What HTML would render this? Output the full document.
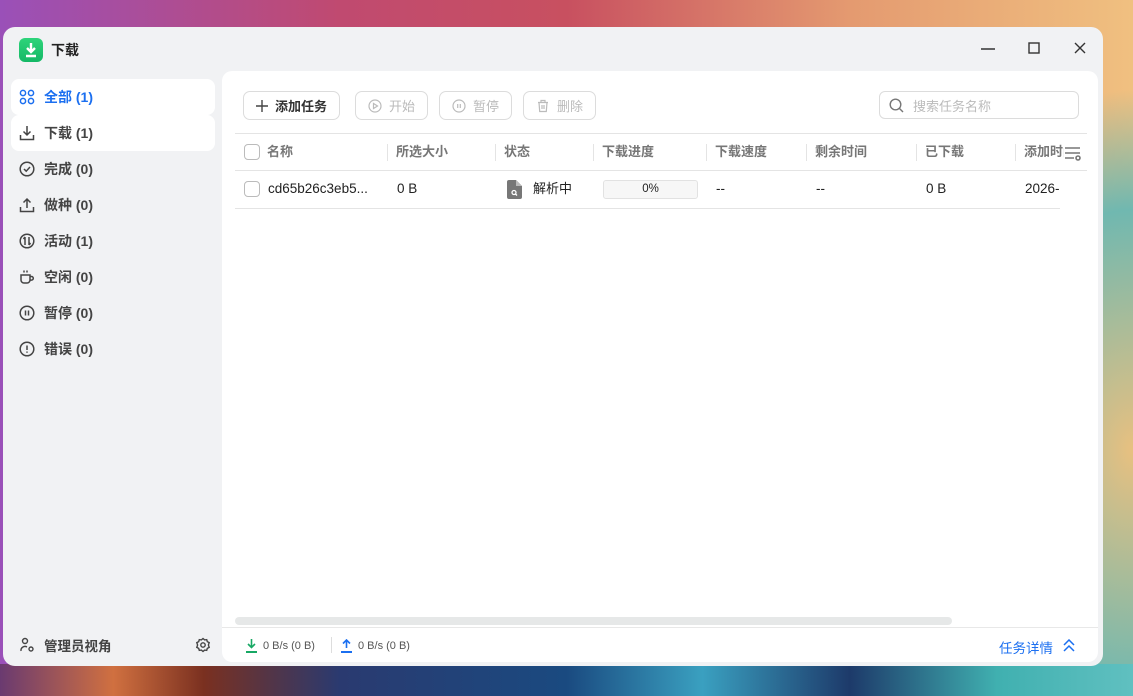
<!DOCTYPE html><html><head><meta charset="utf-8"><style>
*{box-sizing:border-box;margin:0;padding:0}
body{width:1133px;height:696px;overflow:hidden;position:relative;font-family:"Liberation Sans","Noto Sans CJK SC",sans-serif;
background:
radial-gradient(ellipse 260px 400px at 1133px 450px,#e8c080 0%,#70b8b0 60%,transparent 90%),
linear-gradient(90deg,#9a50b8 0%,#c04a70 30%,#c85060 50%,#e49a70 75%,#f0c080 100%);}
.bot{position:absolute;left:0;top:664px;width:1133px;height:32px;background:linear-gradient(90deg,#6a3a70 0%,#d07040 10%,#7a3020 18%,#2a3a70 30%,#1a4a80 50%,#3aa0c0 62%,#1d3a6a 75%,#40b0b0 88%,#60c0c0 100%)}
.win{position:absolute;left:3px;top:27px;width:1100px;height:639px;background:#f1f2f4;border-radius:12px;overflow:hidden}
.logo{position:absolute;left:16px;top:11px;width:24px;height:24px;border-radius:6px;background:linear-gradient(#2ed47a,#14b866)}
.title{position:absolute;left:48px;top:13px;font-size:14px;font-weight:bold;color:#222}
.ctl{position:absolute;top:12px;color:#333}
.nav{position:absolute;left:8px;width:204px;height:36px;border-radius:8px;font-size:14px;font-weight:bold;color:#444;display:flex;align-items:center;padding-left:8px}
.nav svg{margin-right:9px}
.nav.sel{background:#fff;color:#1b6ff0}
.nav.hov{background:#fff}
.main{position:absolute;left:219px;top:44px;width:876px;height:591px;background:#fff;border-radius:10px;overflow:hidden}
.btn{position:absolute;top:20px;height:29px;border:1px solid #dcdcdc;border-radius:7px;font-size:13px;display:flex;align-items:center;padding:0 12px;color:#bbb}
.btn svg{margin-right:7px}
.search{position:absolute;left:657px;top:20px;width:200px;height:28px;border:1px solid #dcdcdc;border-radius:6px;font-size:13px;color:#bbb;display:flex;align-items:center;padding-left:9px}
.hdr{position:absolute;left:13px;top:62px;width:852px;height:38px;border-top:1px solid #e4e4e4;border-bottom:1px solid #e4e4e4;font-size:13px;color:#777;font-weight:bold}
.hdr span,.row span{position:absolute;top:0;line-height:36px}
.sep{position:absolute;top:10px;width:1px;height:17px;background:#e4e4e4}
.row{position:absolute;left:13px;top:100px;width:825px;height:38px;border-bottom:1px solid #e4e4e4;font-size:13.5px;color:#222}
.cb{position:absolute;left:9px;top:10px;width:16px;height:16px;border:1px solid #bbb;border-radius:4px;background:#fff}
.foot{position:absolute;left:0;top:556px;width:876px;height:35px;border-top:1px solid #e8e8e8;font-size:11px;color:#555}
</style></head><body>
<div class="bot"></div>
<div class="win">
<div class="logo"><svg width="24" height="24"><path d="M12 5v9M8 10l4 4 4-4M7 18h10" stroke="#fff" stroke-width="2.4" fill="none"/></svg></div>
<div class="title">下载</div>
<svg class="ctl" style="left:978px" width="14" height="20"><path d="M0 10h14" stroke="#333" stroke-width="1.5"/></svg>
<svg class="ctl" style="left:1025px" width="12" height="20"><rect x="1" y="4" width="10" height="10" stroke="#333" stroke-width="1.4" fill="none"/></svg>
<svg class="ctl" style="left:1071px" width="12" height="20"><path d="M1 4l10 10M11 4L1 14" stroke="#333" stroke-width="1.4"/></svg>

<div class="nav sel" style="top:52px"><svg width="16" height="16" fill="none" stroke="#1b6ff0" stroke-width="1.5"><circle cx="4" cy="4" r="2.6"/><circle cx="12" cy="4" r="2.6"/><circle cx="4" cy="12" r="2.6"/><circle cx="12" cy="12" r="2.6"/></svg>全部 (1)</div>
<div class="nav hov" style="top:88px"><svg width="16" height="16" fill="none" stroke="#444" stroke-width="1.5"><path d="M8 1v9M4.5 6.5L8 10l3.5-3.5M1.5 10v4.5h13V10"/></svg>下载 (1)</div>
<div class="nav" style="top:124px"><svg width="16" height="16" fill="none" stroke="#444" stroke-width="1.5"><circle cx="8" cy="8" r="6.8"/><path d="M5 8l2.2 2.2L11 6"/></svg>完成 (0)</div>
<div class="nav" style="top:160px"><svg width="16" height="16" fill="none" stroke="#444" stroke-width="1.5"><path d="M8 11V2M4.5 5.5L8 2l3.5 3.5M1.5 10v4.5h13V10"/></svg>做种 (0)</div>
<div class="nav" style="top:196px"><svg width="16" height="16" fill="none" stroke="#444" stroke-width="1.5"><circle cx="8" cy="8" r="6.8"/><path d="M6 4v8M4.5 6L6 4M10 12V4M11.5 10L10 12"/></svg>活动 (1)</div>
<div class="nav" style="top:232px"><svg width="16" height="16" fill="none" stroke="#444" stroke-width="1.5"><path d="M2 6h9v5a3 3 0 0 1-3 3H5a3 3 0 0 1-3-3zM11 7.5h1.5a1.8 1.8 0 0 1 0 3.6H11M5 1.5v2M8 1.5v2"/></svg>空闲 (0)</div>
<div class="nav" style="top:268px"><svg width="16" height="16" fill="none" stroke="#444" stroke-width="1.5"><circle cx="8" cy="8" r="6.8"/><path d="M6.5 5.5v5M9.5 5.5v5"/></svg>暂停 (0)</div>
<div class="nav" style="top:304px"><svg width="16" height="16" fill="none" stroke="#444" stroke-width="1.5"><circle cx="8" cy="8" r="6.8"/><path d="M8 4.5v4.5M8 10.5v1.3"/></svg>错误 (0)</div>
<div class="nav" style="top:600px;font-size:13.5px"><svg width="16" height="16" fill="none" stroke="#444" stroke-width="1.4"><circle cx="6" cy="4" r="2.5"/><path d="M2 14a4 4 0 0 1 6-4"/><circle cx="12" cy="12" r="2"/></svg>管理员视角</div>
<svg style="position:absolute;left:192px;top:610px" width="16" height="16" fill="none" stroke="#444" stroke-width="1.4"><path d="M8 1.5l1.6 1.4 2.1-.3.6 2 1.9 1L13.4 8l.8 2.4-1.9 1-.6 2-2.1-.3L8 14.5l-1.6-1.4-2.1.3-.6-2-1.9-1L2.6 8l-.8-2.4 1.9-1 .6-2 2.1.3z"/><circle cx="8" cy="8" r="2.2"/></svg>

<div class="main">
<div class="btn" style="left:21px;color:#333;font-weight:bold"><svg width="12" height="12"><path d="M6 0v12M0 6h12" stroke="#444" stroke-width="1.4"/></svg>添加任务</div>
<div class="btn" style="left:133px"><svg width="14" height="14" fill="none" stroke="#bbb" stroke-width="1.2"><circle cx="7" cy="7" r="6"/><path d="M5.5 4.5v5l4-2.5z"/></svg>开始</div>
<div class="btn" style="left:217px"><svg width="14" height="14" fill="none" stroke="#bbb" stroke-width="1.2"><circle cx="7" cy="7" r="6"/><path d="M5.7 5v4M8.3 5v4"/></svg>暂停</div>
<div class="btn" style="left:301px"><svg width="14" height="14" fill="none" stroke="#bbb" stroke-width="1.2"><path d="M2 3.5h10M5 3.5V1.5h4v2M3 3.5l.7 9h6.6l.7-9M6 6v4M8 6v4"/></svg>删除</div>
<div class="search"><svg width="15" height="15" fill="none" stroke="#777" stroke-width="1.4" style="margin-right:9px"><circle cx="6.5" cy="6.5" r="5.3"/><path d="M10.5 10.5l3.5 3.5"/></svg>搜索任务名称</div>

<div class="hdr">
<div class="cb"></div>
<span style="left:32px">名称</span><div class="sep" style="left:152px"></div>
<span style="left:161px">所选大小</span><div class="sep" style="left:260px"></div>
<span style="left:269px">状态</span><div class="sep" style="left:358px"></div>
<span style="left:367px">下载进度</span><div class="sep" style="left:471px"></div>
<span style="left:480px">下载速度</span><div class="sep" style="left:571px"></div>
<span style="left:580px">剩余时间</span><div class="sep" style="left:681px"></div>
<span style="left:690px">已下载</span><div class="sep" style="left:780px"></div>
<span style="left:789px;width:40px;overflow:hidden;white-space:nowrap">添加时间</span>
<svg style="position:absolute;left:829px;top:11px" width="18" height="16" fill="none" stroke="#777" stroke-width="1.6"><path d="M1 3h15M1 8h15M1 13h9"/><circle cx="14" cy="13" r="2"/></svg>
</div>
<div class="row"><div class="cb"></div>
<span style="left:33px">cd65b26c3eb5...</span>
<span style="left:162px">0 B</span>
<svg style="position:absolute;left:272px;top:9px" width="15" height="19"><path d="M0 2a2 2 0 0 1 2-2h7l6 6v11a2 2 0 0 1-2 2H2a2 2 0 0 1-2-2z" fill="#777"/><path d="M9 0v6h6" fill="#bbb"/><circle cx="7" cy="12.5" r="2" stroke="#fff" stroke-width="1.3" fill="none"/><path d="M8.5 14l1.5 1.5" stroke="#fff" stroke-width="1.3"/></svg>
<span style="left:298px;font-size:13px">解析中</span>
<div style="position:absolute;left:368px;top:9px;width:95px;height:19px;border:1px solid #e2e2e2;border-radius:3px;background:#f7f7f7;font-size:11.5px;text-align:center;line-height:17px">0%</div>
<span style="left:481px">--</span>
<span style="left:581px">--</span>
<span style="left:691px">0 B</span>
<span style="left:790px">2026-</span>
</div>
<div style="position:absolute;left:13px;top:546px;width:717px;height:8px;border-radius:4px;background:#e6e8e8"></div>
<div class="foot">
<svg style="position:absolute;left:24px;top:11px" width="11" height="14"><path d="M5.5 0v8M2 5l3.5 3.5L9 5" stroke="#17a864" stroke-width="1.6" fill="none"/><path d="M0 13h11" stroke="#17a864" stroke-width="2"/></svg>
<span style="position:absolute;left:41px;top:12px">0 B/s (0 B)</span>
<div style="position:absolute;left:109px;top:9px;width:1px;height:16px;background:#ddd"></div>
<svg style="position:absolute;left:119px;top:11px" width="11" height="14"><path d="M5.5 9V1M2 4.5L5.5 1 9 4.5" stroke="#1b6ff0" stroke-width="1.6" fill="none"/><path d="M0 13h11" stroke="#1b6ff0" stroke-width="2"/></svg>
<span style="position:absolute;left:136px;top:12px">0 B/s (0 B)</span>
<span style="position:absolute;left:777px;top:9px;font-size:13.5px;color:#1b6ff0">任务详情</span>
<svg style="position:absolute;left:841px;top:11px" width="12" height="14" fill="none" stroke="#1b6ff0" stroke-width="1.5"><path d="M1 6l5-5 5 5M1 12l5-5 5 5"/></svg>
</div>
</div>
</div>
</body></html>
